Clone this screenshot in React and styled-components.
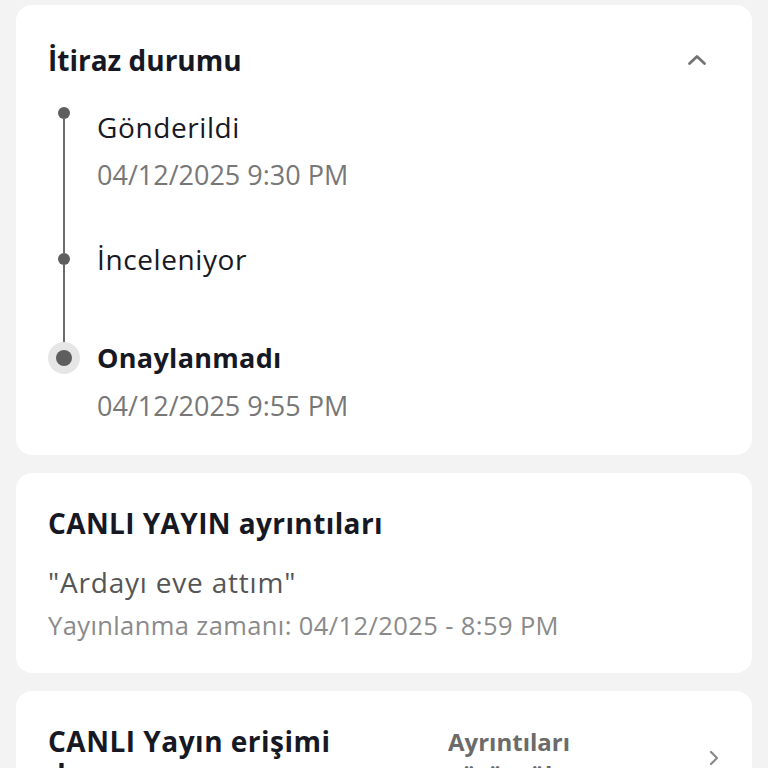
import React from 'react'
import styled, {createGlobalStyle} from 'styled-components'

const Global = createGlobalStyle`
    html, body {
        margin: 0;
        padding: 0;
        overflow: hidden;
        background: #f3f3f3;
    }
    body {
        font-family: "Open Sans", "Noto Sans", sans-serif;
        color: #161823;
    }
`

const Page = styled.div`
    display: flex;
    flex-direction: column;
    gap: 18px;
    padding: 5px 16px 0;
    height: 763px;
    overflow: hidden;
`

const Card = styled.section`
    background: #fff;
    border-radius: 16px;
    padding: ${props => props.pad || '32px 32px 30px'};
    flex-shrink: 0;
`

const Header = styled.div`
    display: flex;
    align-items: center;
    justify-content: space-between;
`

const Title = styled.h2`
    margin: 0;
    font-size: 28px;
    line-height: 40px;
    font-weight: 700;
    letter-spacing: ${props => props.tight ? '0.4px' : '0'};
    color: #161823;
`

const Collapse = styled.button`
    display: flex;
    border: 0;
    background: none;
    padding: 0;
    margin-right: 11px;
    color: #737373;
`

const Timeline = styled.div`
    margin-top: 27px;
    display: flex;
    flex-direction: column;
`

const Step = styled.div`
    display: grid;
    grid-template-columns: 32px 1fr;
    column-gap: 17px;
    min-height: ${props => props.last ? 'auto' : '99px'};
`

const Marker = styled.div`
    display: flex;
    flex-direction: column;
    align-items: center;
`

const Segment = styled.div`
    width: 2px;
    background: ${props => props.hidden ? 'transparent' : '#6b6b6b'};
    height: ${props => props.h ? props.h + 'px' : 'auto'};
    flex: ${props => props.h ? '0 0 auto' : '1'};
`

const Dot = styled.div`
    width: ${props => props.active ? '16px' : '12px'};
    height: ${props => props.active ? '16px' : '12px'};
    border-radius: 50%;
    background: #5e5e5e;
    box-shadow: ${props => props.active ? '0 0 0 8px #e6e6e6' : 'none'};
    flex: 0 0 auto;
    position: relative;
    z-index: 1;
`

const StepBody = styled.div`
    padding-bottom: ${props => props.last ? '0' : '44px'};
`

const StepName = styled.div`
    font-size: ${props => props.active ? '27px' : '28px'};
    line-height: 40px;
    font-weight: ${props => props.active ? 700 : 400};
    letter-spacing: ${props => props.active ? '0.3px' : '0.6px'};
    color: #161823;
`

const StepTime = styled.div`
    margin-top: 8px;
    font-size: 27px;
    line-height: 40px;
    color: #777;
`

const Quote = styled.div`
    margin-top: 19px;
    font-size: 28px;
    line-height: 40px;
    letter-spacing: 0.8px;
    color: #555;
`

const Meta = styled.div`
    margin-top: 5px;
    font-size: 25.5px;
    line-height: 36px;
    letter-spacing: 0.4px;
    color: #8a8a8a;
`

const Row = styled.div`
    display: flex;
    align-items: flex-start;
`

const RowTitle = styled.div`
    width: 368px;
    font-size: 28px;
    line-height: 33px;
    font-weight: 700;
    letter-spacing: 0.5px;
    color: #161823;
`

const RowLink = styled.div`
    width: 150px;
    margin-left: 32px;
    font-size: 24px;
    line-height: 33px;
    font-weight: 700;
    color: #6b6b6b;
`

const RowChevron = styled.div`
    margin-left: auto;
    margin-top: 23px;
    margin-right: -1px;
    display: flex;
    color: #8a8a8a;
`

const steps = [
    {name: 'Gönderildi', time: '04/12/2025 9:30 PM'},
    {name: 'İnceleniyor'},
    {name: 'Onaylanmadı', time: '04/12/2025 9:55 PM', active: true},
]

const App = () => {
    return(
        <>
        <Global />
        <Page>
            <Card pad='35px 32px 29px'>
                <Header>
                    <Title>İtiraz durumu</Title>
                    <Collapse aria-label='Daralt'>
                        <svg width='24' height='24' viewBox='0 0 24 24' fill='none' stroke='currentColor' strokeWidth='2.8' strokeLinecap='round' strokeLinejoin='round'>
                            <path d='M4.5 15.5 12 8.5l7.5 7' />
                        </svg>
                    </Collapse>
                </Header>
                <Timeline>
                    {steps.map((s, i) => {
                        const first = i === 0
                        const last = i === steps.length - 1
                        const size = s.active ? 16 : 12
                        return(
                            <Step key={s.name} last={last}>
                                <Marker>
                                    <Segment h={20 - size / 2 - (first ? 2 : 0)} hidden={first} />
                                    <Dot active={s.active} />
                                    <Segment hidden={last} />
                                </Marker>
                                <StepBody last={last}>
                                    <StepName active={s.active}>{s.name}</StepName>
                                    {s.time && <StepTime>{s.time}</StepTime>}
                                </StepBody>
                            </Step>
                        )
                    })}
                </Timeline>
            </Card>
            <Card pad='30px 32px 30px'>
                <Title tight>CANLI YAYIN ayrıntıları</Title>
                <Quote>"Ardayı eve attım"</Quote>
                <Meta>Yayınlanma zamanı: 04/12/2025 - 8:59 PM</Meta>
            </Card>
            <Card pad='34px 32px 30px'>
                <Row>
                    <RowTitle>CANLI Yayın erişimi durumu</RowTitle>
                    <RowLink>Ayrıntıları görüntüle</RowLink>
                    <RowChevron>
                        <svg width='14' height='20' viewBox='0 0 14 20' fill='none' stroke='currentColor' strokeWidth='2.2' strokeLinecap='round' strokeLinejoin='round'>
                            <path d='M4 4l6 6-6 6' />
                        </svg>
                    </RowChevron>
                </Row>
            </Card>
        </Page>
        </>
    )
}

export default App
